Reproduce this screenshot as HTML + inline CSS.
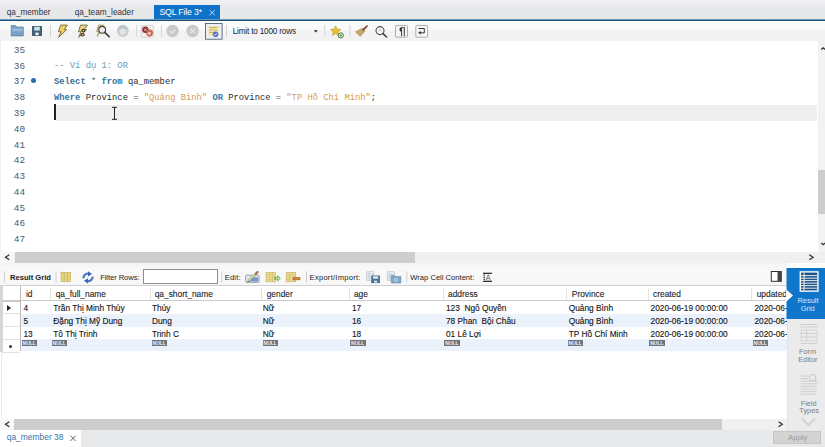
<!DOCTYPE html>
<html><head><meta charset="utf-8">
<style>
*{box-sizing:border-box;}
html,body{margin:0;padding:0;}
body{width:825px;height:447px;overflow:hidden;position:relative;background:#fff;font-family:"Liberation Sans",sans-serif;color:#222;}
.a{position:absolute;}
.t{position:absolute;white-space:nowrap;line-height:1;}
/* tab bar */
#tabbar{left:0;top:0;width:825px;height:19px;background:linear-gradient(#f0f0f2 0,#eeeef0 4px,#e7e8ea 6px,#e6e7e9 19px);}
#blueline{left:0;top:18.6px;width:825px;height:3px;background:linear-gradient(#cfe5f0 0,#2a6690 0.8px,#1a4f74 1.6px,#2a6690 2.2px,#e3f3fa 3px);}
#toolbar{left:0;top:21px;width:825px;height:20px;background:linear-gradient(#f9fbfb 0,#fafafa 8px,#f3f3f4 10px,#f2f2f3 20px);}
.sep{position:absolute;width:1px;background:#c9cdd2;}
#editor{left:0;top:41px;width:818px;height:211px;background:#fff;}
.ln{position:absolute;left:13.8px;font-family:"Liberation Mono",monospace;font-size:9.4px;color:#46606c;line-height:1;}
.code{position:absolute;left:54px;font-family:"Liberation Mono",monospace;font-size:8.8px;line-height:1;white-space:pre;color:#2b2b2b;}
.kw{color:#3a6f96;font-weight:bold;}
.kw2{color:#3479a8;font-weight:bold;}
.cm{color:#6b9db3;}
.st{color:#d49a52;}
.op{color:#555;}
#vscroll{left:818px;top:41px;width:7px;height:211px;background:#f2f2f2;}
#hscroll{left:0;top:252px;width:825px;height:11px;background:#f0f0f0;}
#rtool{left:0;top:263px;width:787px;height:23px;background:linear-gradient(#f4f4f4,#f8f8f8 5px,#f7f7f7);}
.lbl{position:absolute;font-size:7.6px;color:#1c1c1c;line-height:1;white-space:nowrap;}
#grid{left:0;top:286px;width:787px;height:133px;background:#fff;}
.hd{position:absolute;top:0;height:15px;font-size:8.4px;color:#333;line-height:15px;}
.cs{position:absolute;top:0;width:1px;height:15px;background:#d8d8d8;}
.row{position:absolute;left:20px;width:767px;height:13px;}
.cell{position:absolute;font-size:8.3px;color:#222;line-height:13px;white-space:nowrap;}
.null{position:absolute;width:16px;height:6px;background:#6d7377;color:#fff;font-size:5px;line-height:6px;font-weight:bold;text-align:center;letter-spacing:0;}
#hscroll2{left:0;top:419px;width:787px;height:11px;background:#f0f0f0;}
#bottombar{left:0;top:430px;width:825px;height:17px;background:#e8e9ea;}
#rpanel{left:787px;top:268px;width:38px;height:162px;background:#ebebeb;border-left:1px solid #e2e2e2;}
.hdt{font-size:8.4px;color:#222;-webkit-text-stroke:0.1px #222;}
.cellt{font-size:8.3px;color:#141414;-webkit-text-stroke:0.12px #141414;}
.nul{position:absolute;width:15.5px;height:6px;background:#6f7478;color:#eef;font-size:5px;line-height:6px;font-weight:bold;text-align:center;font-family:"Liberation Sans",sans-serif;overflow:hidden;}
</style></head>
<body>
<!-- tab bar -->
<div id="tabbar" class="a"></div>
<div class="t" style="left:6.8px;top:8.6px;font-size:8.2px;color:#333;">qa_member</div>
<div class="t" style="left:74.7px;top:8.6px;font-size:8.2px;color:#333;">qa_team_leader</div>
<div class="a" style="left:154px;top:5.3px;width:66px;height:14.7px;background:#0f72c9;"></div>
<div class="t" style="left:159.4px;top:7.6px;font-size:8.8px;letter-spacing:-0.19px;color:#fff;">SQL File 3*</div>

<div id="blueline" class="a"></div>
<!-- toolbar -->
<div id="toolbar" class="a"></div>

<!-- editor -->
<div id="editor" class="a"></div>
<div class="a" style="left:0;top:41px;width:1px;height:211px;background:#eeeeee;"></div>
<div class="a" style="left:56px;top:104.6px;width:760.5px;height:16px;background:#efefef;"></div>
<div class="a" style="left:54px;top:104px;width:2px;height:15.6px;background:#222;"></div>
<div class="ln" style="top:45.84px;">35</div>
<div class="ln" style="top:61.62px;">36</div>
<div class="ln" style="top:77.40px;">37</div>
<div class="ln" style="top:93.18px;">38</div>
<div class="ln" style="top:108.96px;">39</div>
<div class="ln" style="top:124.74px;">40</div>
<div class="ln" style="top:140.52px;">41</div>
<div class="ln" style="top:156.30px;">42</div>
<div class="ln" style="top:172.08px;">43</div>
<div class="ln" style="top:187.86px;">44</div>
<div class="ln" style="top:203.64px;">45</div>
<div class="ln" style="top:219.42px;">46</div>
<div class="ln" style="top:235.20px;">47</div>
<div class="a" style="left:31px;top:78px;width:5px;height:5px;border-radius:50%;background:#2a6db4;"></div>
<div class="code" style="top:62.3px;"><span class="cm">-- Ví dụ 1: OR</span></div>
<div class="code" style="top:78.2px;"><span class="kw">Select</span> <span class="op">*</span> <span class="kw">from</span> qa_member</div>
<div class="code" style="top:94.4px;"><span class="kw2">Where</span> Province <span class="op">=</span> <span class="st">"Quảng Bình"</span> <span class="kw2">OR</span> Province <span class="op">=</span> <span class="st">"TP Hồ Chí Minh"</span>;</div>

<div id="vscroll" class="a"></div>
<div class="a" style="left:818px;top:170px;width:7px;height:44px;background:#cdcdcd;"></div>
<div id="hscroll" class="a"></div>
<div class="a" style="left:0;top:252px;width:14px;height:11px;background:#f8f8f8;"></div>
<div class="a" style="left:15px;top:252px;width:400px;height:11px;background:#cdcdcd;"></div>

<!-- result toolbar -->
<div id="rtool" class="a"></div>
<div class="lbl" style="left:10px;top:273.6px;font-weight:bold;">Result Grid</div>
<div class="lbl" style="left:100.2px;top:273.6px;letter-spacing:-0.07px;">Filter Rows:</div>
<div class="a" style="left:142.8px;top:269.4px;width:75.4px;height:14.5px;background:#fff;border:1px solid #8e8e8e;"></div>
<div class="lbl" style="left:224.8px;top:273.6px;letter-spacing:0.14px;">Edit:</div>
<div class="lbl" style="left:309.6px;top:273.6px;letter-spacing:0.24px;">Export/Import:</div>
<div class="lbl" style="left:410.3px;top:273.6px;">Wrap Cell Content:</div>

<!-- grid -->
<div id="grid" class="a"></div>
<div class="a" style="left:0;top:284.7px;width:787px;height:1.8px;background:#d0d0d0;"></div>
<div class="a" style="left:0;top:285px;width:2.5px;height:66.5px;background:#d6d6d6;"></div>
<div class="a" style="left:0.5px;top:351.5px;width:1px;height:67px;background:#ececec;"></div>
<div class="a" style="left:2px;top:300px;width:785px;height:1.5px;background:#c9c9c9;"></div>
<div class="a" style="left:20.5px;top:301px;width:766.5px;height:12.8px;background:#fff;"></div>
<div class="a" style="left:2px;top:313.3px;width:18px;height:1px;background:#e2e2e2;"></div>
<div class="a" style="left:20.5px;top:313.8px;width:766.5px;height:12.8px;background:#ecf2fb;"></div>
<div class="a" style="left:2px;top:326.1px;width:18px;height:1px;background:#e2e2e2;"></div>
<div class="a" style="left:20.5px;top:326.6px;width:766.5px;height:12.8px;background:#fff;"></div>
<div class="a" style="left:2px;top:338.9px;width:18px;height:1px;background:#e2e2e2;"></div>
<div class="a" style="left:20.5px;top:339.4px;width:766.5px;height:11.6px;background:#ecf2fb;"></div>
<div class="a" style="left:2px;top:351.7px;width:18px;height:1px;background:#e2e2e2;"></div>
<div class="a" style="left:20px;top:286px;width:1px;height:65px;background:#bdbdbd;"></div>
<div class="a" style="left:50px;top:287.5px;width:1.2px;height:12.5px;background:#e4e4e4;"></div>
<div class="a" style="left:150px;top:287.5px;width:1.2px;height:12.5px;background:#e4e4e4;"></div>
<div class="a" style="left:261px;top:287.5px;width:1.2px;height:12.5px;background:#e4e4e4;"></div>
<div class="a" style="left:348.5px;top:287.5px;width:1.2px;height:12.5px;background:#e4e4e4;"></div>
<div class="a" style="left:442.7px;top:287.5px;width:1.2px;height:12.5px;background:#e4e4e4;"></div>
<div class="a" style="left:566px;top:287.5px;width:1.2px;height:12.5px;background:#e4e4e4;"></div>
<div class="a" style="left:647.6px;top:287.5px;width:1.2px;height:12.5px;background:#e4e4e4;"></div>
<div class="a" style="left:751px;top:287.5px;width:1.2px;height:12.5px;background:#e4e4e4;"></div>
<div class="t hdt" style="left:26px;top:290px;">id</div>
<div class="t hdt" style="left:55.7px;top:290px;">qa_full_name</div>
<div class="t hdt" style="left:154.7px;top:290px;">qa_short_name</div>
<div class="t hdt" style="left:266.7px;top:290px;">gender</div>
<div class="t hdt" style="left:353.9px;top:290px;">age</div>
<div class="t hdt" style="left:448px;top:290px;">address</div>
<div class="t hdt" style="left:571.8px;top:290px;">Province</div>
<div class="t hdt" style="left:653px;top:290px;">created</div>
<div class="t hdt" style="left:756.7px;top:290px;">updated</div>
<div class="t cellt" style="left:23.5px;top:304.2px;">4</div>
<div class="t cellt" style="left:53.3px;top:304.2px;">Trần Thị Minh Thủy</div>
<div class="t cellt" style="left:152px;top:304.2px;">Thủy</div>
<div class="t cellt" style="left:262.7px;top:304.2px;">Nữ</div>
<div class="t cellt" style="left:352px;top:304.2px;">17</div>
<div class="t cellt" style="left:446px;top:304.2px;">123&nbsp; Ngô Quyền</div>
<div class="t cellt" style="left:568.8px;top:304.2px;">Quảng Bình</div>
<div class="t cellt" style="left:650.6px;top:304.2px;">2020-06-19 00:00:00</div>
<div class="t cellt" style="left:754.5px;top:304.2px;">2020-06-19 00:00:00</div>
<div class="t cellt" style="left:23.5px;top:317.0px;">5</div>
<div class="t cellt" style="left:53.3px;top:317.0px;">Đặng Thị Mỹ Dung</div>
<div class="t cellt" style="left:152px;top:317.0px;">Dung</div>
<div class="t cellt" style="left:262.7px;top:317.0px;">Nữ</div>
<div class="t cellt" style="left:352px;top:317.0px;">16</div>
<div class="t cellt" style="left:446px;top:317.0px;">78 Phan&nbsp; Bội Châu</div>
<div class="t cellt" style="left:568.8px;top:317.0px;">Quảng Bình</div>
<div class="t cellt" style="left:650.6px;top:317.0px;">2020-06-19 00:00:00</div>
<div class="t cellt" style="left:754.5px;top:317.0px;">2020-06-19 00:00:00</div>
<div class="t cellt" style="left:23.5px;top:329.8px;">13</div>
<div class="t cellt" style="left:53.3px;top:329.8px;">Tô Thị Trinh</div>
<div class="t cellt" style="left:152px;top:329.8px;">Trinh C</div>
<div class="t cellt" style="left:262.7px;top:329.8px;">Nữ</div>
<div class="t cellt" style="left:352px;top:329.8px;">18</div>
<div class="t cellt" style="left:446px;top:329.8px;">01 Lê Lợi</div>
<div class="t cellt" style="left:568.8px;top:329.8px;">TP Hồ Chí Minh</div>
<div class="t cellt" style="left:650.6px;top:329.8px;">2020-06-19 00:00:00</div>
<div class="t cellt" style="left:754.5px;top:329.8px;">2020-06-19 00:00:00</div>
<div class="nul" style="left:21.5px;top:340.3px;">NULL</div>
<div class="nul" style="left:51.5px;top:340.3px;">NULL</div>
<div class="nul" style="left:151.5px;top:340.3px;">NULL</div>
<div class="nul" style="left:262.5px;top:340.3px;">NULL</div>
<div class="nul" style="left:350.0px;top:340.3px;">NULL</div>
<div class="nul" style="left:444.2px;top:340.3px;">NULL</div>
<div class="nul" style="left:567.5px;top:340.3px;">NULL</div>
<div class="nul" style="left:649.1px;top:340.3px;">NULL</div>
<div class="nul" style="left:752.5px;top:340.3px;">NULL</div>
<div class="a" style="left:6.5px;top:305px;width:0;height:0;border-top:3.5px solid transparent;border-bottom:3.5px solid transparent;border-left:4px solid #222;"></div>
<div class="a" style="left:8.5px;top:344.5px;width:3.5px;height:3.5px;border-radius:50%;background:#333;"></div>
<div id="hscroll2" class="a"></div>
<div class="a" style="left:0;top:419px;width:14px;height:11px;background:#f8f8f8;"></div>
<div class="a" style="left:14px;top:419px;width:708px;height:11px;background:#cdcdcd;"></div>
<div id="bottombar" class="a"></div>
<div class="a" style="left:0;top:430px;width:81px;height:17px;background:#fff;"></div>
<div class="t" style="left:6.7px;top:433.1px;font-size:8.45px;color:#37739f;">qa_member 38</div>

<svg class="a" style="left:0;top:0;" width="825" height="447" viewBox="0 0 825 447">
<!-- toolbar separators -->
<g fill="#d0d4d8">
<rect x="50" y="25" width="1" height="12"/>
<rect x="136.3" y="25" width="1" height="12"/>
<rect x="161" y="25" width="1" height="12"/>
<rect x="226" y="25" width="1" height="12"/>
<rect x="324.3" y="25" width="1" height="12"/>
<rect x="349.5" y="25" width="1" height="12"/>
</g>
<!-- folder -->
<path d="M11.2 25.6h4.3l1.2 1.4h6.6v8.9H11.2z" fill="#7aa2c8" stroke="#56799a" stroke-width="0.7"/>
<rect x="12" y="28.3" width="10.8" height="3" fill="#9dc0de" opacity="0.7"/>
<!-- save -->
<rect x="32" y="26" width="10" height="9.9" rx="0.5" fill="#435e76"/>
<rect x="34.2" y="26.8" width="5.6" height="3.8" fill="#c8e2ec"/>
<rect x="35.3" y="32.6" width="3.4" height="2.6" fill="#e6edf1"/>
<!-- lightning 1 -->
<path d="M60.6 25.1h6.8l-3.2 4.6h2.4l-7.9 7.6 2.3-5.6h-2.6z" fill="#f0d060" stroke="#6f6440" stroke-width="0.9" stroke-linejoin="round"/>
<!-- lightning 2 -->
<path d="M80.6 25.1h6.8l-3.2 4.6h2.4l-7.9 7.6 2.3-5.6h-2.6z" fill="#eed784" stroke="#6f6440" stroke-width="0.9" stroke-linejoin="round"/>
<ellipse cx="83.3" cy="30.6" rx="1.6" ry="1.2" fill="none" stroke="#3d3a20" stroke-width="1.1"/>
<ellipse cx="82.6" cy="34.8" rx="1.6" ry="1.2" fill="none" stroke="#3d3a20" stroke-width="1.1"/>
<!-- magnifier + lightning -->
<path d="M98.5 25.1h5l-2.4 4h1.8l-5.8 7.4 1.6-5h-2z" fill="#eedb8a" stroke="#8c7a3c" stroke-width="0.6"/>
<circle cx="102.2" cy="29.8" r="3.4" fill="#e8ecee" stroke="#3f3f3f" stroke-width="1.1"/>
<path d="M104.6 32.3l4.6 4.4" stroke="#3a3a3a" stroke-width="1.6" stroke-linecap="round"/>
<!-- stop gray -->
<circle cx="122.8" cy="30.9" r="6" fill="#cdd0d2"/>
<path d="M117.2 29.2a6 6 0 0 1 11.2 0z" fill="#b9c7cc"/>
<circle cx="122.8" cy="31.5" r="3" fill="#e4e4e4"/>
<!-- red stop icon -->
<rect x="141.2" y="25.4" width="12.2" height="11.8" rx="0.8" fill="#f4eeee" stroke="#c7bcbc" stroke-width="0.6"/>
<circle cx="145.4" cy="29.8" r="3.2" fill="#8e2a2e"/>
<path d="M144 28.4l2.8 2.8M146.8 28.4l-2.8 2.8" stroke="#f2c9c9" stroke-width="0.9"/>
<circle cx="149.6" cy="33" r="3.4" fill="#c56a4d"/>
<circle cx="149.4" cy="33.3" r="1.6" fill="#f6c9b4"/>
<!-- gray check circle -->
<circle cx="172.6" cy="31" r="6.2" fill="#c9c9c9"/>
<path d="M169.6 31l2.2 2 3.6-3.6" fill="none" stroke="#e9e9e9" stroke-width="1.4"/>
<!-- gray x circle -->
<circle cx="192.6" cy="31" r="6.2" fill="#c9c9c9"/>
<path d="M190.3 28.7l4.6 4.6M194.9 28.7l-4.6 4.6" stroke="#e6e6e6" stroke-width="1.3"/>
<!-- toggle pressed -->
<rect x="205.5" y="23.5" width="16.6" height="15.7" fill="#e9f0f5" stroke="#4e6676" stroke-width="0.9"/>
<rect x="208.5" y="26" width="10" height="9.5" fill="#efe4b0"/>
<path d="M209 27.5h8.5M209 30h8.5M209 32.5h5" stroke="#d2b85c" stroke-width="1"/>
<circle cx="215.6" cy="34.2" r="2.8" fill="#5c6fd0"/>
<path d="M214.2 34.2l1 1 1.8-1.9" fill="none" stroke="#fff" stroke-width="0.8"/>
<!-- dropdown arrow -->
<path d="M313.8 30.2h4l-2 2.3z" fill="#222"/>
<!-- star + plus -->
<path d="M335.6 25.8l1.5 3.3 3.6.4-2.7 2.4.8 3.6-3.2-1.9-3.2 1.9.8-3.6-2.7-2.4 3.6-.4z" fill="#e9c22d" stroke="#a08a30" stroke-width="0.5"/>
<circle cx="340.8" cy="35.4" r="2.6" fill="#f4f7ee" stroke="#3f7b33" stroke-width="1"/>
<path d="M339.4 35.4h2.8M340.8 34v2.8" stroke="#3f7b33" stroke-width="0.8"/>
<!-- broom -->
<path d="M355.5 31.8l7.2-3.8 2.3 3.2-4.9 5.3z" fill="#c9a46a" stroke="#a3824f" stroke-width="0.5"/>
<path d="M363.2 29.8l3.8-3.6" stroke="#7a3e2c" stroke-width="1.7" stroke-linecap="round"/>
<!-- magnifier -->
<circle cx="380" cy="30.6" r="4" fill="#fafafa" stroke="#4a4a4a" stroke-width="1.1"/>
<path d="M378.6 31.8l1.4-3 1.4 3" fill="none" stroke="#9aa" stroke-width="0.6"/>
<path d="M383 33.6l3.6 3.4" stroke="#3d3d3d" stroke-width="1.5" stroke-linecap="round"/>
<!-- pilcrow box -->
<rect x="395.5" y="25.4" width="12" height="11.8" rx="1" fill="#f4f4f4" stroke="#8f8f8f" stroke-width="0.7"/>
<path d="M401.6 27.6v8.6M404.3 27.6v8.6" stroke="#3a3a3a" stroke-width="1"/>
<path d="M401.2 27.6h3.6" stroke="#3a3a3a" stroke-width="0.9"/>
<path d="M401.6 27.2a2.1 2.3 0 0 0 0 4.6z" fill="#2f3a38"/>
<!-- wrap box -->
<rect x="415.8" y="25.4" width="11.8" height="11.8" rx="1" fill="#f6f6f6" stroke="#8f8f8f" stroke-width="0.7"/>
<path d="M418.5 28.5h5.8v4.3h-4" fill="none" stroke="#333" stroke-width="1"/>
<path d="M418.2 32.8l2.4-1.8v3.6z" fill="#222"/>

<!-- result toolbar -->
<g fill="#ccd0d4">
<rect x="4" y="271.5" width="1" height="11"/>
<rect x="55.5" y="271.5" width="1" height="11"/>
<rect x="221.3" y="271.5" width="1" height="11"/>
<rect x="306" y="271.5" width="1" height="11"/>
<rect x="406.3" y="271.5" width="1" height="11"/>
</g>
<!-- columns icon -->
<rect x="61" y="272.4" width="9.6" height="9" fill="#f1dc7e" stroke="#b9a45a" stroke-width="0.6"/>
<path d="M64.2 272.4v9M67.4 272.4v9" stroke="#9a9a8a" stroke-width="0.6"/>
<path d="M61 274.6h9.6M61 276.8h9.6M61 279h9.6" stroke="#d7be52" stroke-width="0.5"/>
<!-- refresh -->
<path d="M83.2 278.2C83.8 275 86 273.4 88.8 273.5" stroke="#4677c6" stroke-width="2.2" fill="none"/>
<path d="M88 271.2L92 274.1 88 276.6Z" fill="#3666b3"/>
<path d="M92.8 276.6C92.2 279.8 90 281.4 87.2 281.3" stroke="#4677c6" stroke-width="2.2" fill="none"/>
<path d="M88 283.6L84 280.7 88 278.2Z" fill="#3666b3"/>
<!-- edit icon -->
<rect x="245.6" y="275.2" width="13.6" height="7.2" rx="0.8" fill="#dfe5ee" stroke="#8d929b" stroke-width="0.8"/>
<rect x="250" y="277.3" width="8.2" height="4.2" fill="#7794d2"/>
<path d="M248.2 281.2l8.2-8" stroke="#8aa05a" stroke-width="2.2"/>
<path d="M248.2 281.2l8.2-8" stroke="#e4ecb0" stroke-width="1.1"/>
<path d="M255.8 273.8l1.8-1.8" stroke="#a86a5a" stroke-width="2.2" stroke-linecap="round"/>
<path d="M247.6 282.2l1.2-1.4" stroke="#222" stroke-width="1"/>
<!-- add row -->
<rect x="266" y="272.3" width="9.5" height="9.5" fill="#f3e08a" stroke="#c0a96a" stroke-width="0.6"/>
<path d="M266 274.8h9.5M266 277.2h9.5M266 279.6h9.5M269.2 272.3v9.5M272.4 272.3v9.5" stroke="#c7b37a" stroke-width="0.5"/>
<path d="M274.5 277.5h3.2v-1.8l2.6 2.6-2.6 2.6v-1.8h-3.2z" fill="#c9ef9e" stroke="#4f8f3a" stroke-width="0.7"/>
<!-- delete row -->
<rect x="286.2" y="272.3" width="9.5" height="9.5" fill="#f3e08a" stroke="#c0a96a" stroke-width="0.6"/>
<path d="M286.2 274.8h9.5M286.2 277.2h9.5M286.2 279.6h9.5M289.4 272.3v9.5M292.6 272.3v9.5" stroke="#c7b37a" stroke-width="0.5"/>
<rect x="293.2" y="277.3" width="6.8" height="2.6" fill="#d8883a" stroke="#9a5a2a" stroke-width="0.5"/>
<!-- export -->
<rect x="366.8" y="271.8" width="7" height="8.5" fill="#eef2f6" stroke="#aab4c0" stroke-width="0.5"/>
<path d="M366.8 274h7M366.8 276.2h7M366.8 278.4h7M369.2 271.8v8.5" stroke="#aab4c0" stroke-width="0.5"/>
<rect x="371.3" y="275.5" width="8.6" height="7.6" fill="#4a6b8a"/>
<rect x="373" y="276.2" width="5.2" height="2.6" fill="#cfe6f4"/>
<rect x="374" y="280.6" width="3.2" height="2" fill="#dce8f0"/>
<!-- import -->
<rect x="387.6" y="271.8" width="7" height="8.5" fill="#eef2f6" stroke="#aab4c0" stroke-width="0.5"/>
<path d="M387.6 274h7M387.6 276.2h7M387.6 278.4h7M390 271.8v8.5" stroke="#aab4c0" stroke-width="0.5"/>
<path d="M391.3 275.6h3.4l0.8 1h5.4v6.4h-9.6z" fill="#7ea8c8" stroke="#5a7f9c" stroke-width="0.5"/>
<circle cx="396" cy="280" r="1.6" fill="none" stroke="#d9ecf7" stroke-width="0.7"/>
<!-- wrap cell icon -->
<rect x="483" y="272.7" width="9" height="1.3" fill="#333"/>
<rect x="483" y="280.7" width="9" height="1.3" fill="#333"/>
<path d="M484.2 274.5v5.8" stroke="#333" stroke-width="1.3" stroke-dasharray="1.3 0.8"/>
<path d="M486.2 280.3l2.1-5.6 2.1 5.6M487 278.5h2.6" fill="none" stroke="#555" stroke-width="0.7"/>
<!-- toggle panel -->
<rect x="771.3" y="271.5" width="10" height="9.8" fill="#fff" stroke="#333" stroke-width="1"/>
<rect x="777.5" y="271.5" width="3.8" height="9.8" fill="#444"/>
</svg>


<div class="t" style="left:232.7px;top:28.3px;font-size:8.2px;letter-spacing:-0.18px;color:#222;">Limit to 1000 rows</div>
<svg class="a" style="left:0;top:0;" width="825" height="447" viewBox="0 0 825 447">
<path d="M112 107.3h5M112 119.3h5M114.5 107.3v12" stroke="#222" stroke-width="1"/>
<path d="M9.3 254.8l-3.8 2.5 3.8 2.5" fill="none" stroke="#333" stroke-width="1.3"/>
<path d="M809.3 254.8l3.8 2.5-3.8 2.5" fill="none" stroke="#333" stroke-width="1.3"/>
<path d="M821.2 243l2 1.8 2-1.8" fill="none" stroke="#333" stroke-width="1.2"/>
<path d="M821.2 49.5l2-1.8 2 1.8" fill="none" stroke="#333" stroke-width="1.2"/>
<path d="M9.3 421.8l-3.8 2.5 3.8 2.5" fill="none" stroke="#333" stroke-width="1.3"/>
<path d="M778.5 421.8l3.8 2.5-3.8 2.5" fill="none" stroke="#333" stroke-width="1.3"/>
<path d="M70.3 435.6l5.4 5.4M75.7 435.6l-5.4 5.4" stroke="#555" stroke-width="0.9"/>
<path d="M209.6 10l5.2 5.2M214.8 10l-5.2 5.2" stroke="#d5e7f8" stroke-width="0.9"/>
</svg>
<div id="rpanel" class="a"></div>
<svg class="a" style="left:0;top:0;" width="825" height="447" viewBox="0 0 825 447">
<path d="M786 289.5L793 295.5L786 301.5Z" fill="#fff"/>
<path d="M786.5 268H825V319H786.5V301.5L793 295.5L786.5 289.5Z" fill="#0f76cc"/>
<rect x="799.6" y="271.2" width="19" height="20.6" fill="#fff"/>
<rect x="801" y="272.6" width="16.2" height="17.8" fill="#1b4f86"/>
<g fill="#fff">
<rect x="801" y="275.2" width="16.2" height="0.9"/>
<rect x="801" y="277.7" width="16.2" height="0.9"/>
<rect x="801" y="280.2" width="16.2" height="0.9"/>
<rect x="801" y="282.7" width="16.2" height="0.9"/>
<rect x="801" y="285.2" width="16.2" height="0.9"/>
<rect x="801" y="287.7" width="16.2" height="0.9"/>
<rect x="803.6" y="272.6" width="0.9" height="17.8"/>
</g>
<!-- form editor icon -->
<g fill="none" stroke="#cdcdcd" stroke-width="0.9">
<path d="M800.5 324.5h17M800.5 327h17"/>
<path d="M801 330h16v11h-16z" stroke="#d2d2d2"/>
<path d="M801 333.5h16M801 337h16M806.5 330v11"/>
<path d="M800.5 343.5h17"/>
</g>
<!-- field types icon -->
<g fill="none" stroke="#cacaca" stroke-width="0.9">
<path d="M800.5 376h8M800.5 378.6h7.5M800.5 381.2h16M800.5 383.8h16M800.5 386.4h16M800.5 389h16M800.5 391.6h16M800.5 394.2h16"/>
<circle cx="812.6" cy="377.6" r="3.3" fill="#ececec" stroke="#c4c4c4"/>
<path d="M815 380l2.6 2.4" stroke="#c4c4c4"/>
</g>
<path d="M802 418.6l6.5 6.4 6.5-6.4" fill="none" stroke="#d3d3d3" stroke-width="2.2"/>
</svg>
<div class="t" style="left:797.5px;top:296.5px;font-size:7.4px;color:#d6eaff;">Result</div>
<div class="t" style="left:800.7px;top:304.5px;font-size:7.4px;color:#d6eaff;">Grid</div>
<div class="t" style="left:799px;top:348px;font-size:7.4px;color:#7e7e7e;">Form</div>
<div class="t" style="left:798.2px;top:356px;font-size:7.4px;color:#7e7e7e;">Editor</div>
<div class="t" style="left:800.7px;top:400px;font-size:7.4px;color:#7e7e7e;">Field</div>
<div class="t" style="left:799.3px;top:406.5px;font-size:7.4px;color:#7e7e7e;">Types</div>

<div class="a" style="left:773px;top:431px;width:48px;height:13px;background:#d3d3d3;border:1px solid #c6c6c6;"></div>
<div class="t" style="left:788px;top:434.2px;font-size:7.6px;letter-spacing:0.1px;color:#9a9a9a;">Apply</div>
</body></html>
